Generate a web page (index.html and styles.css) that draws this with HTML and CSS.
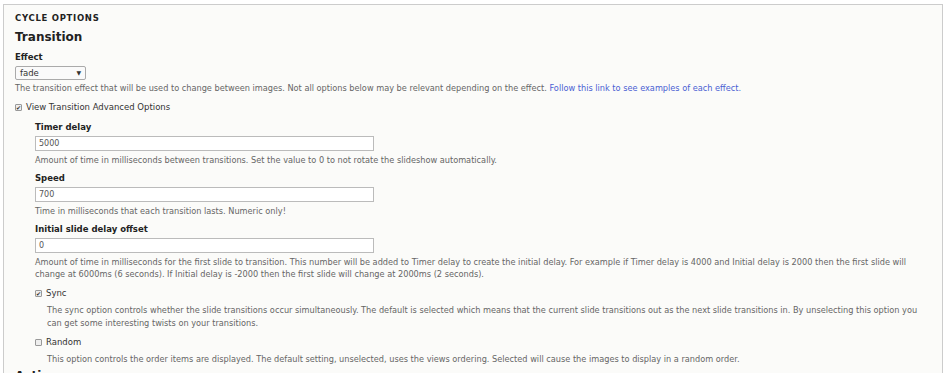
FILE: index.html
```html
<!DOCTYPE html>
<html>
	<head>
		<meta charset="UTF-8">
		<title>Cycle options</title>
		<link rel="stylesheet" href="styles.css">
	</head>
	<body>
		<div class="fieldset">
			<div class="legend">CYCLE OPTIONS</div>
			<h2>Transition</h2>
			<div class="item">
				<label class="lbl">Effect</label>
				<div class="select">fade<span class="arrow">&#9660;</span></div>
				<div class="desc">The transition effect that will be used to change between images. Not all options below may be relevant depending on the effect. <a href="javascript:;">Follow this link to see examples of each effect.</a></div>
			</div>
			<div class="check-row"><span class="box on">&#10004;</span>View Transition Advanced Options</div>
			<div class="advanced">
				<div class="item">
					<label class="lbl">Timer delay</label>
					<div class="text">5000</div>
					<div class="desc">Amount of time in milliseconds between transitions. Set the value to 0 to not rotate the slideshow automatically.</div>
				</div>
				<div class="item">
					<label class="lbl">Speed</label>
					<div class="text">700</div>
					<div class="desc">Time in milliseconds that each transition lasts. Numeric only!</div>
				</div>
				<div class="item">
					<label class="lbl">Initial slide delay offset</label>
					<div class="text">0</div>
					<div class="desc">Amount of time in milliseconds for the first slide to transition. This number will be added to Timer delay to create the initial delay. For example if Timer delay is 4000 and Initial delay is 2000 then the first slide will change at 6000ms (6 seconds). If Initial delay is -2000 then the first slide will change at 2000ms (2 seconds).</div>
				</div>
				<div class="opt">
					<div class="check-row"><span class="box on">&#10004;</span>Sync</div>
					<div class="desc sub">The sync option controls whether the slide transitions occur simultaneously. The default is selected which means that the current slide transitions out as the next slide transitions in. By unselecting this option you can get some interesting twists on your transitions.</div>
				</div>
				<div class="opt">
					<div class="check-row"><span class="box"></span>Random</div>
					<div class="desc sub">This option controls the order items are displayed. The default setting, unselected, uses the views ordering. Selected will cause the images to display in a random order.</div>
				</div>
			</div>
			<h2 class="next-section">Action</h2>
		</div>
	</body>
</html>
```

FILE: styles.css
```css
*{
	margin: 0;
	padding: 0;
	box-sizing: border-box;
}
body{
	background: #fff;
	font-family: "DejaVu Sans", Verdana, sans-serif;
	color: #333;
	padding: 4px 4px 0 3px;
}
.fieldset{
	border: 1px solid #ccc;
	border-bottom: none;
	background: #fbfbf9;
	padding: 7px 14px 0 11px;
	height: 380px;
	overflow: hidden;
}
.legend{
	font-size: 8.5px;
	font-weight: bold;
	letter-spacing: 0.7px;
	line-height: 12px;
	color: #222;
}
h2{
	font-size: 12px;
	font-weight: bold;
	line-height: 16px;
	margin-top: 5px;
	color: #222;
}
h2.next-section{
	margin-top: 2px;
}
.item{
	margin-top: 6px;
}
.advanced .item{
	margin-top: 6px;
}
.advanced .item:first-child{
	margin-top: 0;
}
.lbl{
	display: block;
	font-size: 8.5px;
	font-weight: bold;
	line-height: 12px;
	color: #222;
}
.select{
	width: 71px;
	height: 14px;
	margin-top: 3px;
	border: 1px solid #aaa;
	border-radius: 2px;
	background: #fafafa;
	font-size: 8.5px;
	line-height: 12px;
	padding-left: 4px;
	position: relative;
	color: #333;
}
.arrow{
	position: absolute;
	right: 4px;
	top: 0;
	font-size: 6px;
}
.text{
	width: 339px;
	height: 15px;
	margin-top: 3px;
	border: 1px solid #bbb;
	background: #fff;
	font-size: 8px;
	line-height: 13px;
	padding-left: 3px;
	color: #555;
}
.text + .desc{
	margin-top: 3px;
}
.desc{
	font-size: 8.2px;
	line-height: 12px;
	color: #666;
	margin-top: 2px;
}
.desc a{
	color: #4a5fd3;
	text-decoration: none;
}
.check-row{
	display: flex;
	align-items: center;
	font-size: 8.5px;
	line-height: 12px;
	margin-top: 7px;
	color: #333;
}
.box{
	width: 7px;
	height: 7px;
	border: 1px solid #999;
	background: #eee;
	border-radius: 1px;
	margin-right: 4px;
	font-size: 6px;
	line-height: 5px;
	text-align: center;
	color: #333;
}
.advanced{
	padding-left: 20px;
	margin-top: 8px;
}
.opt{
	margin-top: 7px;
}
.desc.sub{
	padding-left: 12px;
	margin-top: 5px;
	line-height: 12.5px;
}
```
